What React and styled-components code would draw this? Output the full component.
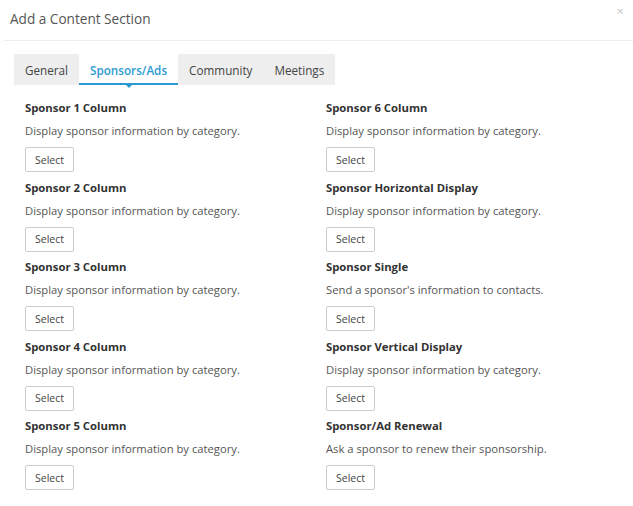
import React from "react";
import styled, { createGlobalStyle } from "styled-components";

const Global = createGlobalStyle`
  html, body { margin: 0; padding: 0; background: #fff; }
  body { font-family: "Open Sans", "Liberation Sans", sans-serif; color: #333; }
  * { box-sizing: border-box; }
`;

const Modal = styled.div`
  width: 633px;
  min-height: 506px;
  background: #fff;
  position: relative;
`;

const Header = styled.div`
  height: 41px;
  margin-left: 4px;
  padding: 0 6px;
  display: flex;
  align-items: center;
  border-bottom: 1px solid #ececec;
`;

const Title = styled.h4`
  margin: 0;
  font-size: 13.6px;
  font-weight: 400;
  color: #555;
  padding-bottom: 3px;
`;

const Close = styled.span`
  position: absolute;
  top: 2px;
  right: 9px;
  font-size: 13px;
  color: #c8c8c8;
`;

const Body = styled.div`
  padding: 13px 14px 0 14px;
`;

const TabBar = styled.div`
  display: inline-flex;
  background: #eeeeee;
  height: 31px;
`;

const Tab = styled.div`
  position: relative;
  padding: 2px 11px 0;
  display: flex;
  align-items: center;
  font-size: 11.7px;
  font-weight: ${(p) => (p.$active ? 600 : 400)};
  color: ${(p) => (p.$active ? "#2c9ad1" : "#444")};
  background: ${(p) => (p.$active ? "#fff" : "transparent")};
  border-bottom: 2px solid ${(p) => (p.$active ? "#2c9ad1" : "transparent")};
  ${(p) =>
    p.$active &&
    `
    &::after {
      content: "";
      position: absolute;
      left: 50%;
      bottom: -5px;
      margin-left: -3px;
      border-left: 3px solid transparent;
      border-right: 3px solid transparent;
      border-top: 3px solid #2c9ad1;
    }
  `}
`;

const Grid = styled.div`
  display: grid;
  grid-template-columns: 301px 301px;
  padding: 15px 0 0 11px;
`;

const Column = styled.div`
  display: flex;
  flex-direction: column;
`;

const Item = styled.div`
  display: flex;
  flex-direction: column;
  align-items: flex-start;
  padding-bottom: 7.5px;
`;

const ItemTitle = styled.div`
  font-size: 11.3px;
  font-weight: 700;
  line-height: 16px;
  height: 16px;
  color: #333;
`;

const ItemDesc = styled.div`
  font-size: 11.25px;
  line-height: 18px;
  height: 18px;
  color: #555;
  margin-top: 6px;
`;

const SelectButton = styled.button`
  margin-top: 7px;
  height: 25px;
  width: 49px;
  padding: 0;
  border: 1px solid #ccc;
  border-radius: 2px;
  background: #fff;
  font-family: "Open Sans", "Liberation Sans", sans-serif;
  font-size: 10.5px;
  color: #444;
`;

const left = [
  ["Sponsor 1 Column", "Display sponsor information by category."],
  ["Sponsor 2 Column", "Display sponsor information by category."],
  ["Sponsor 3 Column", "Display sponsor information by category."],
  ["Sponsor 4 Column", "Display sponsor information by category."],
  ["Sponsor 5 Column", "Display sponsor information by category."],
];
const right = [
  ["Sponsor 6 Column", "Display sponsor information by category."],
  ["Sponsor Horizontal Display", "Display sponsor information by category."],
  ["Sponsor Single", "Send a sponsor's information to contacts."],
  ["Sponsor Vertical Display", "Display sponsor information by category."],
  ["Sponsor/Ad Renewal", "Ask a sponsor to renew their sponsorship."],
];

const Col = ({ items }) => (
  <Column>
    {items.map(([t, d]) => (
      <Item key={t}>
        <ItemTitle>{t}</ItemTitle>
        <ItemDesc>{d}</ItemDesc>
        <SelectButton>Select</SelectButton>
      </Item>
    ))}
  </Column>
);

export default function App() {
  return (
    <>
      <Global />
      <Modal>
        <Header>
          <Title>Add a Content Section</Title>
        </Header>
        <Close>×</Close>
        <Body>
          <TabBar>
            <Tab>General</Tab>
            <Tab $active>Sponsors/Ads</Tab>
            <Tab>Community</Tab>
            <Tab>Meetings</Tab>
          </TabBar>
          <Grid>
            <Col items={left} />
            <Col items={right} />
          </Grid>
        </Body>
      </Modal>
    </>
  );
}
